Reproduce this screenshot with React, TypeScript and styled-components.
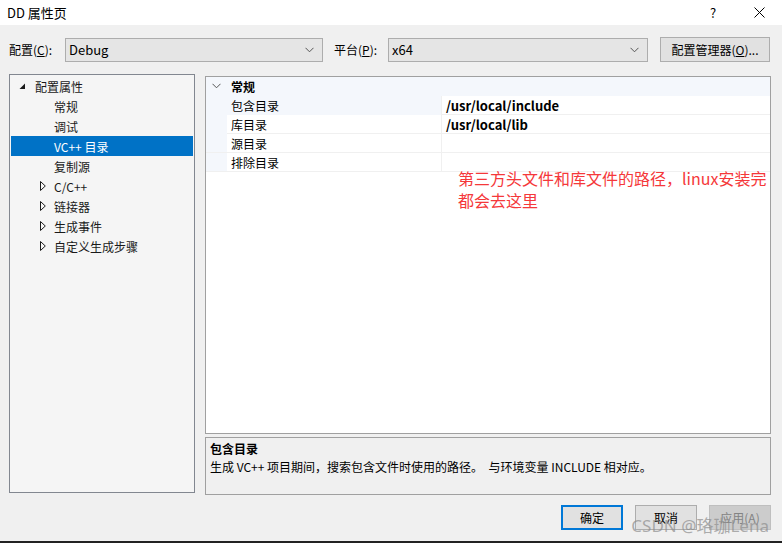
import styled, { createGlobalStyle } from "styled-components";

const GlobalStyle = createGlobalStyle`
    html, body {
        margin: 0;
        padding: 0;
        background: #f0f0f0;
    }
    * {
        box-sizing: border-box;
    }
`;

const font = `"Microsoft YaHei UI", "Noto Sans CJK SC", "Noto Sans", sans-serif`;

const Window = styled.div`
    width: 782px;
    height: 543px;
    display: flex;
    flex-direction: column;
    background: #f0f0f0;
    font-family: ${font};
    font-size: 12px;
    color: #1a1a1a;
    border-bottom: 2px solid #222;
`;

const TitleBar = styled.div`
    height: 25px;
    background: #ffffff;
    display: flex;
    align-items: center;
    padding: 0 0 0 7px;
`;

const Title = styled.div`
    flex: 1;
    font-size: 13px;
    color: #000;
`;

const TitleButton = styled.div`
    width: 46px;
    height: 25px;
    display: flex;
    align-items: center;
    justify-content: center;
    font-size: 13px;
    color: #000;
`;

const Body = styled.div`
    flex: 1;
    display: flex;
    flex-direction: column;
    padding: 12px 11px 0 9px;
`;

const ConfigRow = styled.div`
    display: flex;
    align-items: center;
    height: 25px;
`;

const FieldLabel = styled.div<{ w: number }>`
    width: ${p => p.w}px;
    color: #000;
    u {
        text-decoration: underline;
    }
`;

const Combo = styled.div<{ w: number }>`
    width: ${p => p.w}px;
    height: 24px;
    border: 1px solid #adadad;
    background: #e5e5e5;
    display: flex;
    align-items: center;
    justify-content: space-between;
    padding: 0 8px 0 3px;
    font-size: 13px;
    color: #000;
`;

const Button = styled.div<{ w: number; primary?: boolean; disabled?: boolean }>`
    width: ${p => p.w}px;
    height: 25px;
    display: flex;
    align-items: center;
    justify-content: center;
    background: ${p => (p.disabled ? "#cccccc" : "#e1e1e1")};
    border: ${p => (p.primary ? "2px solid #0078d7" : p.disabled ? "1px solid #bfbfbf" : "1px solid #adadad")};
    color: ${p => (p.disabled ? "#838383" : "#000")};
    font-size: 12px;
`;

const Main = styled.div`
    display: flex;
    margin-top: 12px;
    height: 421px;
    gap: 10px;
`;

const Tree = styled.div`
    width: 186px;
    height: 419px;
    border: 1px solid #828790;
    background: #f5f5f5;
    padding: 1px;
`;

const TreeItem = styled.div<{ level: number; selected?: boolean }>`
    height: 20px;
    display: flex;
    align-items: center;
    padding-left: ${p => (p.level === 0 ? 8 : p.level === 1 ? 29 : 43)}px;
    background: ${p => (p.selected ? "#0072c6" : "transparent")};
    color: ${p => (p.selected ? "#ffffff" : "#1a1a1a")};
    font-size: 12px;
`;

const Twisty = styled.span<{ gap: number }>`
    width: ${p => 14 + p.gap}px;
    height: 20px;
    display: flex;
    align-items: center;
`;

const RightColumn = styled.div`
    width: 566px;
    margin-top: 2px;
    display: flex;
    flex-direction: column;
    gap: 3px;
`;

const Grid = styled.div`
    height: 358px;
    border: 1px solid #a0a0a0;
    background: #ffffff;
`;

const GridRow = styled.div<{ category?: boolean }>`
    height: 19px;
    display: grid;
    grid-template-columns: 21px 214px 1fr;
    background: ${p => (p.category ? "#f4f7fc" : "#ffffff")};
    border-bottom: 1px solid ${p => (p.category ? "#f4f7fc" : "#f0f0f0")};
`;

const Margin = styled.div`
    background: #f4f7fc;
    display: flex;
    align-items: center;
    justify-content: center;
`;

const Cell = styled.div<{ value?: boolean; selected?: boolean; bold?: boolean }>`
    display: flex;
    align-items: center;
    padding-left: 4px;
    font-weight: ${p => (p.bold || p.value ? 700 : 400)};
    font-size: ${p => (p.value ? 13 : 12)}px;
    background: ${p => (p.selected ? "#f4f7fc" : "transparent")};
    border-left: ${p => (p.value ? "1px solid #f0f0f0" : "none")};
    color: #000;
`;

const Note = styled.div`
    margin: -5px 0 0 252px;
    font-size: 16px;
    line-height: 22px;
    color: #f5383a;
`;

const Description = styled.div`
    height: 58px;
    border: 1px solid #a0a0a0;
    background: #f0f0f0;
    padding: 2px 4px;
    line-height: 18px;
    color: #000;
`;

const DescTitle = styled.div`
    font-weight: 700;
`;

const Footer = styled.div`
    position: relative;
    display: flex;
    justify-content: flex-end;
    gap: 12px;
    margin-top: 10px;
`;

const Watermark = styled.div`
    position: absolute;
    right: 2px;
    top: 7px;
    font-size: 17px;
    color: rgba(140, 140, 140, 0.7);
    font-family: "Noto Sans", "Noto Sans CJK SC", sans-serif;
    pointer-events: none;
`;

const Chevron = () => (
    <svg width="9" height="6" viewBox="0 0 9 6">
        <polyline points="0.5,0.8 4.5,4.8 8.5,0.8" fill="none" stroke="#555" strokeWidth="1" />
    </svg>
);

const Expanded = () => (
    <svg width="7" height="7" viewBox="0 0 7 7">
        <polygon points="6,0.5 6,6 0.5,6" fill="#1a1a1a" />
    </svg>
);

const Collapsed = () => (
    <svg width="6" height="10" viewBox="0 0 6 10">
        <polygon points="0.5,0.5 5.3,5 0.5,9.5" fill="none" stroke="#1a1a1a" strokeWidth="1" />
    </svg>
);

const treeItems = [
    { label: "配置属性", level: 0, twisty: "open" },
    { label: "常规", level: 2 },
    { label: "调试", level: 2 },
    { label: "VC++ 目录", level: 2, selected: true },
    { label: "复制源", level: 2 },
    { label: "C/C++", level: 1, twisty: "closed" },
    { label: "链接器", level: 1, twisty: "closed" },
    { label: "生成事件", level: 1, twisty: "closed" },
    { label: "自定义生成步骤", level: 1, twisty: "closed" },
];

const props = [
    { label: "包含目录", value: "/usr/local/include", selected: true },
    { label: "库目录", value: "/usr/local/lib" },
    { label: "源目录", value: "" },
    { label: "排除目录", value: "" },
];

function App() {
    return (
        <>
            <GlobalStyle />
            <Window>
                <TitleBar>
                    <Title>DD 属性页</Title>
                    <TitleButton>?</TitleButton>
                    <TitleButton>
                        <svg width="11" height="11" viewBox="0 0 11 11">
                            <path d="M0.5 0.5 L10.5 10.5 M10.5 0.5 L0.5 10.5" stroke="#000" strokeWidth="1" />
                        </svg>
                    </TitleButton>
                </TitleBar>
                <Body>
                    <ConfigRow>
                        <FieldLabel w={56}>配置(<u>C</u>):</FieldLabel>
                        <Combo w={258}>
                            <span>Debug</span>
                            <Chevron />
                        </Combo>
                        <FieldLabel w={54} style={{ marginLeft: 11 }}>平台(<u>P</u>):</FieldLabel>
                        <Combo w={260}>
                            <span>x64</span>
                            <Chevron />
                        </Combo>
                        <Button w={110} style={{ marginLeft: 12 }}>配置管理器(<u>O</u>)...</Button>
                    </ConfigRow>
                    <Main>
                        <Tree>
                            {treeItems.map(item => (
                                <TreeItem key={item.label} level={item.level} selected={item.selected}>
                                    {item.twisty && (
                                        <Twisty gap={item.level === 0 ? 2 : 0}>
                                            {item.twisty === "open" ? <Expanded /> : <Collapsed />}
                                        </Twisty>
                                    )}
                                    <span>{item.label}</span>
                                </TreeItem>
                            ))}
                        </Tree>
                        <RightColumn>
                            <Grid>
                                <GridRow category>
                                    <Margin>
                                        <Chevron />
                                    </Margin>
                                    <Cell bold>常规</Cell>
                                    <div />
                                </GridRow>
                                {props.map(p => (
                                    <GridRow key={p.label}>
                                        <Margin />
                                        <Cell selected={p.selected}>{p.label}</Cell>
                                        <Cell value>{p.value}</Cell>
                                    </GridRow>
                                ))}
                                <Note>
                                    第三方头文件和库文件的路径，linux安装完
                                    <br />
                                    都会去这里
                                </Note>
                            </Grid>
                            <Description>
                                <DescTitle>包含目录</DescTitle>
                                <div>生成 VC++ 项目期间，搜索包含文件时使用的路径。&nbsp;&nbsp;与环境变量 INCLUDE 相对应。</div>
                            </Description>
                        </RightColumn>
                    </Main>
                    <Footer>
                        <Button w={62} primary>确定</Button>
                        <Button w={62}>取消</Button>
                        <Button w={62} disabled>应用(A)</Button>
                        <Watermark>CSDN @珞珈Lena</Watermark>
                    </Footer>
                </Body>
            </Window>
        </>
    );
}

export default App;
